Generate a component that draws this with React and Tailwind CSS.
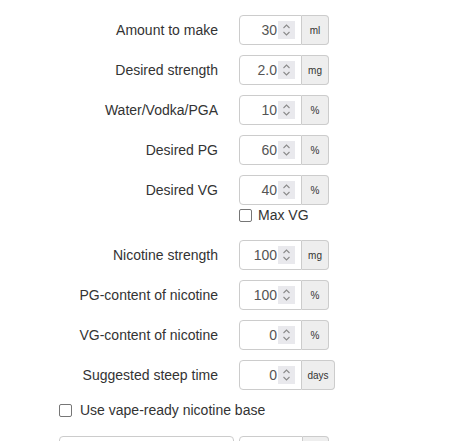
import React from 'react';

const rows1 = [
  { label: 'Amount to make', value: '30', unit: 'ml' },
  { label: 'Desired strength', value: '2.0', unit: 'mg' },
  { label: 'Water/Vodka/PGA', value: '10', unit: '%' },
  { label: 'Desired PG', value: '60', unit: '%' },
  { label: 'Desired VG', value: '40', unit: '%' },
];

const rows2 = [
  { label: 'Nicotine strength', value: '100', unit: 'mg' },
  { label: 'PG-content of nicotine', value: '100', unit: '%' },
  { label: 'VG-content of nicotine', value: '0', unit: '%' },
  { label: 'Suggested steep time', value: '0', unit: 'days' },
];

function Spinner() {
  return (
    <span className="flex h-[18px] w-[17px] shrink-0 items-center justify-center bg-[#e9e9ed]">
      <svg width="9" height="14" viewBox="0 0 9 14" fill="none" stroke="#8a8a8a" strokeWidth="1.1">
        <path d="M1.5 5 L4.5 2 L7.5 5" />
        <path d="M1.5 9 L4.5 12 L7.5 9" />
      </svg>
    </span>
  );
}

function Checkbox() {
  return <span className="inline-block h-[13px] w-[13px] shrink-0 rounded-[2px] border border-[#767676] bg-white" />;
}

function NumberGroup({ value, unit }) {
  const wide = unit === 'days';
  return (
    <div className="ml-[21px] flex h-[30px]">
      <div className="flex w-[63px] items-center justify-end rounded-l-[4px] border border-[#ccc] bg-white pr-[6px]">
        <span className="mr-[1px] text-[14px] text-[#555]">{value}</span>
        <Spinner />
      </div>
      <div
        className={`flex items-center justify-center rounded-r-[4px] border border-l-0 border-[#ccc] bg-[#eee] text-[10px] text-[#333] ${
          wide ? 'w-[33px]' : 'w-[27px]'
        }`}
      >
        {unit}
      </div>
    </div>
  );
}

function Row({ label, value, unit, last }) {
  return (
    <div className={`flex h-[30px] items-center ${last ? '' : 'mb-[10px]'}`}>
      <label className="w-[218px] text-right text-[14px] text-[#333]">{label}</label>
      <NumberGroup value={value} unit={unit} />
    </div>
  );
}

export default function App() {
  return (
    <div className="min-h-[441px] bg-white pt-[15px] font-['Liberation_Sans',Arial,sans-serif]">
      {rows1.map((r, i) => (
        <Row key={r.label} {...r} last={i === rows1.length - 1} />
      ))}
      <div className="flex h-[21px] items-center pl-[239px]">
        <Checkbox />
        <span className="ml-[6px] text-[14px] text-[#333]">Max VG</span>
      </div>
      <div className="h-[14px]" />
      {rows2.map((r, i) => (
        <Row key={r.label} {...r} last={i === rows2.length - 1} />
      ))}
      <div className="mt-[10px] flex h-[21px] items-center pl-[59px]">
        <Checkbox />
        <span className="ml-[8px] text-[14px] text-[#333]">Use vape-ready nicotine base</span>
      </div>
      <div className="mt-[15px] flex pl-[59px]">
        <div className="h-[30px] w-[175px] rounded-[4px] border border-[#ccc] bg-white" />
        <div className="ml-[5px] flex h-[30px]">
          <div className="w-[64px] rounded-l-[4px] border border-[#ccc] bg-white" />
          <div className="w-[26px] rounded-r-[4px] border border-l-0 border-[#ccc] bg-[#eee]" />
        </div>
      </div>
    </div>
  );
}
